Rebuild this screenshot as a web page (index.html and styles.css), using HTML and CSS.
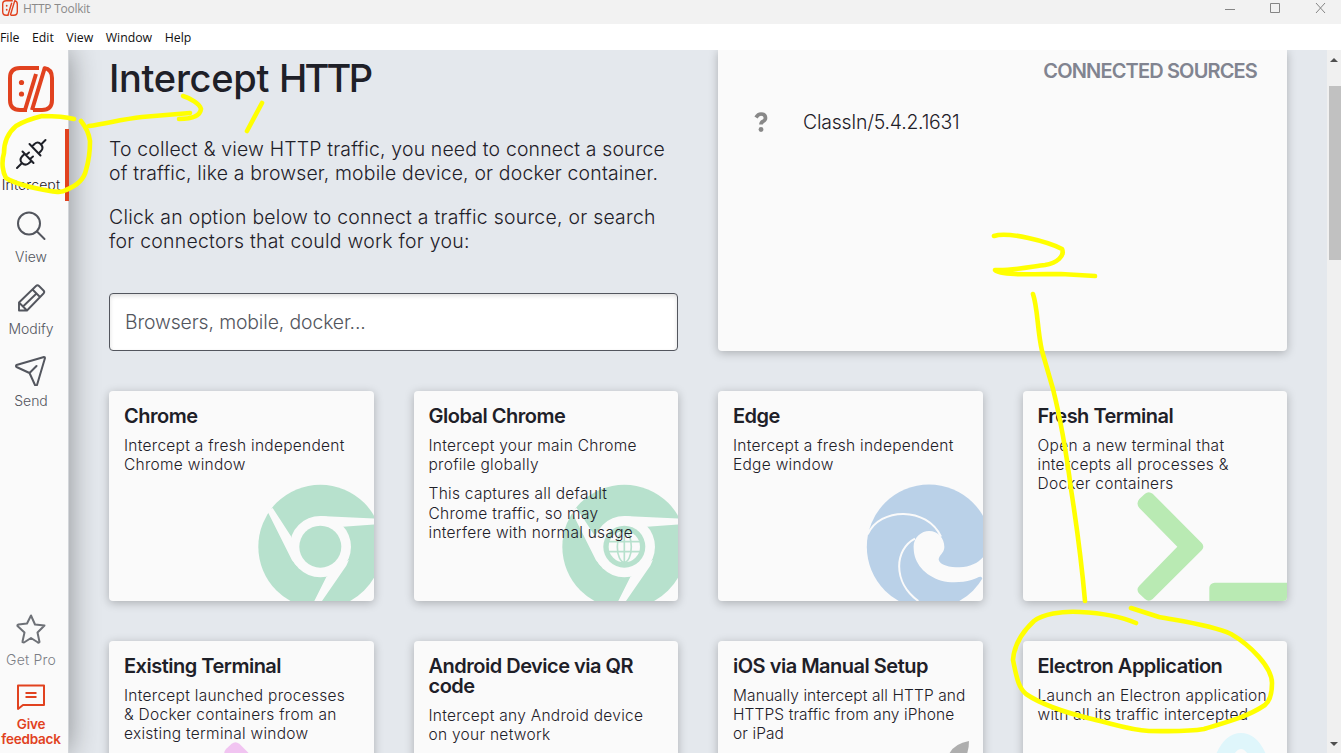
FILE: index.html
```html
<!DOCTYPE html>
<html lang="en">
<head>
<meta charset="utf-8">
<title>HTTP Toolkit</title>
<link rel="stylesheet" href="styles.css">
</head>
<body>
<svg class="defs" width="0" height="0">
  <defs>
    <g id="logo">
      <path d="M31 2H12Q2 2 2 12v22Q2 44 12 44h7M36 2Q44 3 44 12v22Q44 44 34 44h-9" fill="none" stroke="#e1421f" stroke-width="4"/>
      <path d="M28 8 17 44M37 1 24 44" fill="none" stroke="#e1421f" stroke-width="4"/>
      <circle cx="13.500" cy="16.500" r="2.600" fill="#e1421f"/><circle cx="13.500" cy="28" r="2.600" fill="#e1421f"/>
    </g>
    <g id="chrome">
      <circle cx="240" cy="231" r="186" fill="#b7e1cd"/>
      <g fill="#fafafa">
        <circle cx="240" cy="231" r="92"/>
        <path d="M80 122 97 115 152 200 170 290 155 272 84 130ZM240 139 405 147V164L308 171 250 160ZM326 270 318 288 245 394H222L258 322Z"/>
      </g>
      <circle cx="240" cy="231" r="63" fill="#b7e1cd"/>
    </g>
    <g id="prompt">
      <path d="M884 72Q895 63 907 72L1054 220Q1064 231 1054 242L907 388Q895 399 884 388L867 372Q856 360 867 348L981 231 867 115Q856 101 867 88Z"/>
      <rect x="1077" y="339" width="260" height="70" rx="16"/>
    </g>
  </defs>
</svg>

<header class="titlebar">
  <svg class="app-icon" viewBox="0 0 46 46"><use href="#logo"/></svg>
  <span class="app-name">HTTP Toolkit</span>
  <svg class="window-buttons" width="106" height="24" fill="none" stroke="#858585"><path d="M2 9.500h10M47.500 3.500h9v9h-9zM93 3l9 10M102 3l-9 10"/></svg>
</header>
<nav class="menubar"><span>File</span><span>Edit</span><span>View</span><span>Window</span><span>Help</span></nav>

<div class="workspace">
  <aside class="sidebar">
    <svg class="brand" viewBox="0 0 46 46"><use href="#logo"/></svg>
    <a class="nav-item active">
      <svg width="32" height="32" viewBox="0 0 32 32" fill="none" stroke="#1e2028" stroke-width="2" stroke-linecap="round"><path d="M2 30l4.500-4.500M26 6.500L30.500 2M14.500 6L25.500 17.500M17 8.500L19.500 6Q23 3 26 6.500T26 13L23.500 15.500M7.500 13.500L18.500 25M9.500 16L7 18.500Q4 22 7 25T13.500 25.500L16.500 23M14 14.500L11 17M18 18.500L15 21"/></svg>
      <span class="tight">Intercept</span></a>
    <a class="nav-item">
      <svg width="32" height="32" viewBox="0 0 32 32" fill="none" stroke="#53565e" stroke-width="2" stroke-linecap="round"><circle cx="14" cy="13.500" r="11"/><path d="M22 21.500l7.500 7.500"/></svg>
      <span>View</span></a>
    <a class="nav-item">
      <svg width="32" height="32" viewBox="0 0 32 32" fill="none" stroke="#53565e" stroke-width="1.900" stroke-linejoin="round"><path d="M4 28.500V20.500L21 4q1.500-1.500 3 0l4.500 4.500q1.500 1.500 0 3L12 28.500ZM17.500 7.500l8 8M4 20.500L12 28.500M8 24.500L21.500 11.500"/></svg>
      <span>Modify</span></a>
    <a class="nav-item">
      <svg width="32" height="32" viewBox="0 0 32 32" fill="none" stroke="#53565e" stroke-width="2" stroke-linejoin="round" stroke-linecap="round"><path d="M29 3L1.500 11q-1 1 0 2l13 6 5.500 12q1 1 2 0L30 4q0-1-1-1zM14.500 19l7-7"/></svg>
      <span>Send</span></a>
    <div class="spacer"></div>
    <a class="nav-item muted">
      <svg width="32" height="32" viewBox="0 0 32 32" fill="none" stroke="#6e7177" stroke-width="2" stroke-linejoin="round"><path d="M16 2.500l4 9 9.500 1-7 7 2 9.500q-1 1-1.500 0.500L16 25l-7 4.500q-2 0-1.500-1L9.500 19.500 2.500 13q-.5-1 1-1.500l8.500-1z"/></svg>
      <span>Get Pro</span></a>
    <a class="nav-item feedback">
      <svg width="32" height="32" viewBox="0 0 32 32" fill="none" stroke="#e1421f" stroke-width="2" stroke-linejoin="round"><path d="M3 4.500h26v19.500H8L3 28zM10.500 12h11M10.500 16h11"/></svg>
      <span>Give<br>feedback</span></a>
  </aside>

  <main class="content">
    <section class="top">
      <div class="intro">
        <h1>Intercept <span class="acronym">HTTP</span></h1>
        <p>To collect &amp; view HTTP traffic, you need to connect a source<br>of traffic, like a browser, mobile device, or docker container.</p>
        <p class="wide">Click an option below to connect a traffic source, or search<br>for connectors that could work for you:</p>
        <div class="search">Browsers, mobile, docker...</div>
      </div>
      <div class="sources">
        <h2>CONNECTED SOURCES</h2>
        <div class="source"><svg width="14" height="20" viewBox="0 0 14 20"><path d="M2 5.500Q4 2 7 2q4.500 0 4.500 4 0 2-2.500 3.500-2 1-2 3" fill="none" stroke="#888" stroke-width="3.700"/><circle cx="7" cy="17.500" r="2.400" fill="#888"/></svg><span>ClassIn/5.4.2.1631</span></div>
      </div>
    </section>
    <section class="cards">
      <article class="card">
        <svg class="art nudge" width="117.300" height="117.700" viewBox="50 40 352 353"><use href="#chrome"/></svg>
        <h3>Chrome</h3><p>Intercept a fresh independent<br>Chrome window</p>
      </article>
      <article class="card">
        <svg class="art" width="117.300" height="117.700" viewBox="50 40 352 353"><use href="#chrome"/><circle cx="240" cy="231" r="47" fill="#fafafa"/><g fill="none" stroke="#b7e1cd" stroke-width="5"><ellipse cx="240" cy="231" rx="21" ry="47"/><path d="M240 184v94M193 216h94M193 246h94"/></g></svg>
        <h3>Global Chrome</h3><p>Intercept your main Chrome<br>profile globally</p><p>This captures all default<br>Chrome traffic, so may<br>interfere with normal usage</p>
      </article>
      <article class="card">
        <svg class="art" width="117.700" height="117.700" viewBox="46 40 353 353"><circle cx="238" cy="231" r="186.500" fill="#bad1e8"/><g fill="none" stroke="#fafafa" stroke-width="6"><path d="M54 194C91 112 232 110 274 201M196 207C135 238 127 337 206 394"/></g><path fill="#fafafa" d="M192 235C189 205 215 184 238 184 265 184 284 205 284 232 284 250 267 257 267 270 270 286 300 293 330 293 360 293 385 280 400 263V329L395 322C391 318 380 326 365 331 340 338 305 341 275 333 225 318 192 280 192 235Z"/></svg>
        <h3>Edge</h3><p>Intercept a fresh independent<br>Edge window</p>
      </article>
      <article class="card">
        <svg class="art" width="153.300" height="117.700" viewBox="851 40 460 353" fill="#b9eab3"><use href="#prompt"/></svg>
        <h3>Fresh Terminal</h3><p>Open a new terminal that<br>intercepts all processes &amp;<br>Docker containers</p>
      </article>
      <article class="card">
        <svg class="art" width="153.300" height="117.700" viewBox="849 40 460 353" fill="#f1c4f1"><use href="#prompt"/></svg>
        <h3>Existing Terminal</h3><p>Intercept launched processes<br>&amp; Docker containers from an<br>existing terminal window</p>
      </article>
      <article class="card">
        <h3>Android Device via QR<br>code</h3><p>Intercept any Android device<br>on your network</p>
      </article>
      <article class="card">
        <svg class="art" width="100" height="111" viewBox="0 0 100 111" fill="#aeaeae"><path d="M86 1Q69 4 65 17 65 24 66 26 86 25 86 1Z"/></svg>
        <h3>iOS via Manual Setup</h3><p class="snug">Manually intercept all HTTP and<br>HTTPS traffic from any iPhone<br>or iPad</p>
      </article>
      <article class="card">
        <svg class="art" width="100" height="120" viewBox="0 0 100 120" fill="none" stroke="#dff6fb" stroke-width="16"><ellipse cx="54" cy="61" rx="24" ry="51"/></svg>
        <h3>Electron Application</h3><p>Launch an Electron application<br>with all its traffic intercepted</p>
      </article>
    </section>
  </main>

  <div class="scrollbar"><i class="arrow up"></i><i class="thumb"></i><i class="arrow down"></i></div>
</div>

<svg class="ink" width="1341" height="753" viewBox="0 0 1341 753" fill="none" stroke="#ffff00" stroke-width="4.600" stroke-linecap="round" stroke-linejoin="round">
  <path d="M74 119C63 116 52 116 42 116 34 118 24 121 16 126 9 132 4 142 4 153 1 163 3 173 6 178 15 184 33 188 50 191 56 192 62 193 66 190 76 186 84 180 86 170 89 160 90 149 90 141 89 134 85 126 81 121"/>
  <path d="M89 126C108 123 124 119 142 117L190 113M183 96C190 98 200 104 201 109 200 117 190 119 179 119"/>
  <path d="M262 103 247 131"/>
  <path d="M994 236C1008 231 1049 242 1062 249 1065 256 1057 263 1045 265 1030 267 1010 271 995 270 1000 276 1040 274 1061 274L1095 276"/>
  <path d="M1033 294C1038 309 1037 329 1042 351L1053 389C1061 421 1066 450 1071 489 1078 534 1082 567 1085 601"/>
  <path d="M1136 623C1120 616 1100 613 1080 612 1061 611 1043 614 1034 621 1021 633 1014 646 1013 660 1017 680 1019 688 1026 694 1042 705 1067 713 1092 719 1117 725 1130 730 1149 731 1170 731 1187 732 1204 729 1220 724 1246 718 1265 705 1271 700 1272 692 1272 683 1272 667 1250 645 1231 634 1212 625 1180 621 1159 617L1131 608"/>
</svg>
</body>
</html>
```
FILE: styles.css
```css
* { box-sizing: border-box; }
body { margin: 0; height: 753px; overflow: hidden; position: relative; background: #fff; color: #1e2028; font-family: Inter, "Open Sans", sans-serif; font-weight: 300; }
h1, h2, h3, p { margin: 0; white-space: nowrap; }
.defs { position: absolute; }

.titlebar { height: 24px; background: #f2f2f2; display: flex; align-items: flex-start; font: 12px/18px "Open Sans", sans-serif; color: #8a8a8a; }
.app-icon { width: 16px; height: 16px; margin: 0 5px 0 2px; }
.app-name { letter-spacing: -.25px; }
.window-buttons { margin-left: auto; margin-right: 12px; }
.menubar { height: 26px; display: flex; gap: 12.500px; font: 12.300px/27px "Open Sans", sans-serif; color: #111; }

.workspace { display: flex; height: 703px; overflow: hidden; background: #e4e8ed; }
.sidebar { width: 69px; flex: none; display: flex; flex-direction: column; background: #fafafa; border-right: 1px solid #d2d5d9; box-shadow: 0 0 30px rgba(0,0,0,.4); z-index: 1; }
.brand { width: 46px; height: 46px; margin: 16px 0 17px 8px; flex: none; }
.nav-item { position: relative; height: 72px; flex: none; width: 62px; padding-top: 9px; display: flex; flex-direction: column; align-items: center; color: #53565e; font-size: 14px; line-height: 16px; text-align: center; }
.nav-item svg { margin-bottom: 7px; flex: none; }
.nav-item.active { color: #1e2028; }
.nav-item.active::after { content: ""; position: absolute; left: 65px; top: 0; width: 4px; height: 72px; background: #e1421f; }
.tight { letter-spacing: .1px; }
.spacer { flex: 1; }
.nav-item.muted { color: #7b7e85; height: 68px; letter-spacing: .2px; }
.nav-item.feedback { color: #e1421f; font-weight: 600; font-size: 13.500px; line-height: 15px; height: 81px; letter-spacing: -.2px; }
.nav-item.feedback svg { margin-bottom: 4px; }

.content { flex: 1; padding: 0 40px; min-width: 0; }
.top { display: grid; grid-template-columns: 569px 569px; gap: 40px; height: 301px; }
h1 { font-size: 38px; line-height: 46px; font-weight: 500; letter-spacing: -.3px; margin: 5px 0 36px; }
.acronym { letter-spacing: -2.700px; }
.intro p { font-size: 19.400px; line-height: 24px; margin-bottom: 20px; letter-spacing: .18px; }
.intro .wide { letter-spacing: .27px; }
.search { margin-top: 40px; height: 58px; border: 1px solid #53565e; border-radius: 4px; background: #fff; box-shadow: inset 0 2px 4px rgba(0,0,0,.13); padding: 0 15px; font-size: 19.400px; line-height: 57px; letter-spacing: -.12px; color: #53565e; }
.sources { background: #fafafa; border-radius: 0 0 4px 4px; box-shadow: 0 2px 10px rgba(0,0,0,.25); padding: 8px 30px 0 36px; }
.sources h2 { text-align: right; color: #818490; font-size: 20px; line-height: 26px; font-weight: 600; letter-spacing: -.85px; }
.source { display: flex; align-items: center; margin-top: 26px; height: 24px; font-size: 19.400px; letter-spacing: -.22px; }
.source span { margin-left: 35px; }

.cards { display: grid; grid-template-columns: repeat(4, 264.500px); grid-auto-rows: 210px; gap: 40px; margin-top: 40px; }
.card { position: relative; overflow: hidden; background: #fafafa; border-radius: 4px; box-shadow: 0 2px 10px rgba(0,0,0,.25); padding: 15px; }
.card h3 { position: relative; font-size: 20px; line-height: 20px; font-weight: 600; letter-spacing: -.5px; margin-bottom: 10px; }
.card p { position: relative; font-size: 15.500px; line-height: 19.200px; margin-bottom: 10px; letter-spacing: .28px; }
.card .snug { letter-spacing: .1px; }
.art { position: absolute; right: 0; bottom: 0; }
.nudge { right: -.5px; }

.scrollbar { width: 14px; flex: none; background: #f0f0f0; display: flex; flex-direction: column; align-items: flex-end; }
.thumb { width: 12px; height: 174px; margin-top: 24px; background: #c1c1c1; }
.arrow { border: 4px solid transparent; margin-right: 3px; }
.arrow.up { border-top: 0; border-bottom-color: #505050; margin-top: 8px; }
.arrow.down { border-bottom: 0; border-top-color: #505050; margin-top: auto; margin-bottom: 7px; }
.ink { position: absolute; left: 0; top: 0; pointer-events: none; z-index: 5; }
```
